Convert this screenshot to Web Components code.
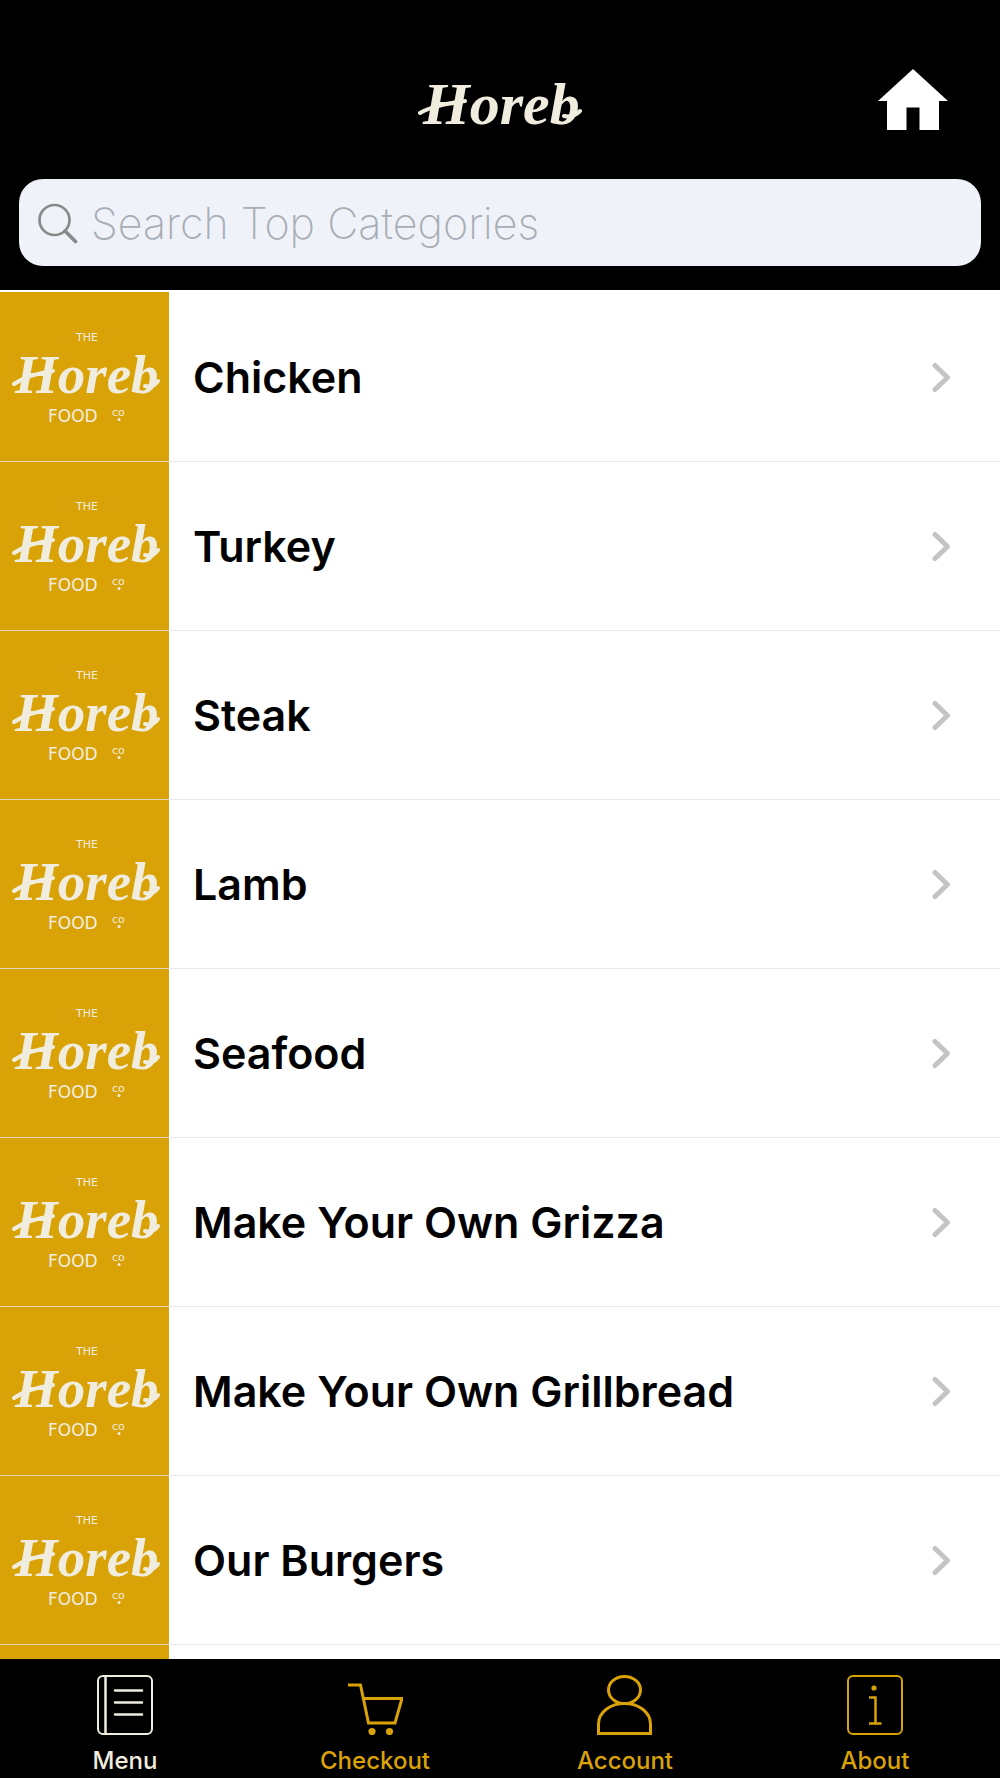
<!DOCTYPE html>
<html lang="en">
<head>
<meta charset="utf-8">
<meta name="viewport" content="width=device-width, initial-scale=1">
<title>Horeb – Top Categories</title>
<style>
  html, body { margin: 0; height: 100%; }
  body {
    --gold: #d9a206;
    --cream: #f0eddf;
    font-family: Inter, "Open Sans", sans-serif;
    color: #000;
    background: #fff;
  }
</style>
</head>
<body>
<horeb-app></horeb-app>

<template id="t-app">
  <style>
    :host { display: flex; flex-direction: column; height: 100vh; overflow: hidden; }
    main { flex: 1; min-height: 0; overflow: hidden; padding-top: 2px; }
    ul { list-style: none; margin: 0; padding: 0; }
  </style>
  <top-bar></top-bar>
  <main>
    <ul>
      <li><category-row>Chicken</category-row></li>
      <li><category-row>Turkey</category-row></li>
      <li><category-row>Steak</category-row></li>
      <li><category-row>Lamb</category-row></li>
      <li><category-row>Seafood</category-row></li>
      <li><category-row>Make Your Own Grizza</category-row></li>
      <li><category-row>Make Your Own Grillbread</category-row></li>
      <li><category-row>Our Burgers</category-row></li>
      <li><category-row blank></category-row></li>
    </ul>
  </main>
  <tab-bar>
    <tab-item current>
      <svg slot="icon" viewBox="0 0 56 60" fill="none" stroke="currentColor" stroke-width="2"><rect x="1" y="1" width="54" height="58" rx="5"/><path d="M8.500 1v58M18 15.500h27M18 27.500h27M18 39.500h27" stroke-width="2.500" stroke-linecap="round"/></svg>
      Menu
    </tab-item>
    <tab-item>
      <svg slot="icon" viewBox="0 0 56 60" fill="none" stroke="currentColor" stroke-width="3"><path d="M1 10h12.500l8 38h26.500l7-24.500H17"/><circle cx="25" cy="56.500" r="3.600" fill="currentColor" stroke="none"/><circle cx="42.500" cy="56.500" r="3.600" fill="currentColor" stroke="none"/></svg>
      Checkout
    </tab-item>
    <tab-item>
      <svg slot="icon" viewBox="0 0 56 60" fill="none" stroke="currentColor" stroke-width="3"><ellipse cx="27.500" cy="15" rx="16" ry="13.500"/><path d="M1.500 58.500V49C1.500 37 13.500 28.500 27.500 28.500S53.500 37 53.500 49v9.500z"/></svg>
      Account
    </tab-item>
    <tab-item>
      <svg slot="icon" viewBox="0 0 56 60" fill="none" stroke="currentColor" stroke-width="2"><rect x="1" y="1" width="54" height="58" rx="5"/><circle cx="27" cy="13" r="2.600" fill="currentColor" stroke="none"/><path d="M22 22.500h6.500v26M22 48.500h12.500" stroke-width="2.500"/></svg>
      About
    </tab-item>
  </tab-bar>
</template>

<template id="t-top">
  <style>
    :host { display: block; background: #000; color: #fff; padding: 20px 19px 24px; }
    .title { display: grid; grid-template-columns: 1fr auto 1fr; align-items: center; height: 159px; }
    brand-word { grid-column: 2; width: 164px; }
    .home { justify-self: end; margin-right: 33px; color: inherit; }
    .home svg { display: block; width: 70px; height: 61px; }
    form { display: flex; align-items: center; gap: 12px; height: 87px; padding: 0 18px; border-radius: 24px; background: #eff3f9; }
    label { display: block; color: #898989; }
    label svg { display: block; width: 42px; height: 42px; }
    input { flex: 1; min-width: 0; border: 0; padding: 0; outline: 0; background: none; color: #333; font: 200 43px/52px Inter, sans-serif; appearance: none; }
    input::placeholder { color: #a9adb5; opacity: 1; }
  </style>
  <div class="title">
    <brand-word></brand-word>
    <a class="home" href="#home" aria-label="Home"><svg viewBox="0 0 70 61" fill="currentColor"><path d="M35 0L70 32h-9v29H41.500V38.500H28.500V61H9V32H0z"/></svg></a>
  </div>
  <form role="search">
    <label for="q" aria-label="Search"><svg viewBox="0 0 42 42" fill="none" stroke="currentColor"><ellipse cx="17.500" cy="18" rx="15" ry="15" stroke-width="2.700"/><path d="M28 29L38.500 39.500" stroke-width="3.700" stroke-linecap="round"/></svg></label>
    <input id="q" type="search" placeholder="Search Top Categories">
  </form>
</template>

<template id="t-word">
  <style>
    :host { display: block; color: var(--cream); }
    svg { display: block; width: 100%; overflow: visible; }
    text { font: italic 700 60px "Liberation Serif", serif; }
  </style>
  <svg viewBox="0 0 164 62" fill="currentColor">
    <text x="5" y="55">Horeb</text>
    <path d="M2 44C12 38 31 34 47 32M146 47q9 2 16-5" fill="none" stroke="currentColor" stroke-width="4" stroke-linecap="round"/>
  </svg>
</template>

<template id="t-badge">
  <style>
    :host { display: block; color: var(--cream); background: var(--gold); }
    svg { display: var(--mark, block); width: 100%; }
    .word { font: italic 700 55px "Liberation Serif", serif; }
    .small { font: 11px "DejaVu Sans", sans-serif; }
    .big { font: 17px "DejaVu Sans", sans-serif; }
  </style>
  <svg viewBox="0 0 169 169" fill="currentColor">
    <text class="small" x="87" y="49" text-anchor="middle">THE</text>
    <text class="word" x="15" y="101">Horeb</text>
    <path d="M14 92C24 85 38 81 53 79M145 94q8 2 13-5" fill="none" stroke="currentColor" stroke-width="4" stroke-linecap="round"/>
    <text class="big" x="48" y="130">FOOD</text>
    <text class="small" x="112" y="124">co</text>
    <circle cx="119" cy="127.500" r="1.500"/>
  </svg>
</template>

<template id="t-row">
  <style>
    :host { display: block; }
    :host([blank]) { --mark: none; }
    a { position: relative; display: flex; align-items: center; height: 169px; color: inherit; text-decoration: none; }
    a::before { content: ""; position: absolute; inset: 0 0 auto; height: 1px; background: rgba(228, 228, 230, .8); }
    :host-context(li:first-child) a::before { display: none; }
    brand-badge { flex: none; width: 169px; height: 169px; }
    .name { flex: 1; padding-left: 24px; font-size: 43px; line-height: 52px; font-weight: 600; }
    .chev { flex: none; width: 20px; height: 32px; margin-right: 48px; color: #c4c4c4; }
  </style>
  <a href="#category">
    <brand-badge></brand-badge>
    <span class="name"><slot></slot></span>
    <svg class="chev" viewBox="0 0 20 32" fill="none" stroke="currentColor" stroke-width="5" stroke-linecap="round" stroke-linejoin="round"><path d="M3 4.500L15.500 16.500 3 28.500"/></svg>
  </a>
</template>

<template id="t-tabs">
  <style>
    :host { display: block; flex: none; background: #000; }
    nav { display: grid; grid-template-columns: repeat(4, 1fr); }
  </style>
  <nav aria-label="Main"><slot></slot></nav>
</template>

<template id="t-tab">
  <style>
    :host { display: block; color: var(--gold); }
    :host([current]) { color: var(--cream); }
    a { display: flex; flex-direction: column; align-items: center; gap: 12px; padding: 16px 0 3px; color: inherit; text-decoration: none; font-size: 24px; line-height: 28px; font-weight: 500; }
    ::slotted(svg) { display: block; width: 56px; height: 60px; }
  </style>
  <a href="#tab"><slot name="icon"></slot><span><slot></slot></span></a>
</template>

<script>
  class TemplateElement extends HTMLElement {
    constructor() {
      super();
      const source = document.getElementById(this.constructor.template);
      this.attachShadow({ mode: "open" }).append(source.content.cloneNode(true));
    }
  }
  const define = (name, template) =>
    customElements.define(name, class extends TemplateElement { static template = template; });

  define("brand-word", "t-word");
  define("brand-badge", "t-badge");
  define("category-row", "t-row");
  define("tab-item", "t-tab");
  define("tab-bar", "t-tabs");
  define("top-bar", "t-top");
  define("horeb-app", "t-app");
</script>
</body>
</html>
